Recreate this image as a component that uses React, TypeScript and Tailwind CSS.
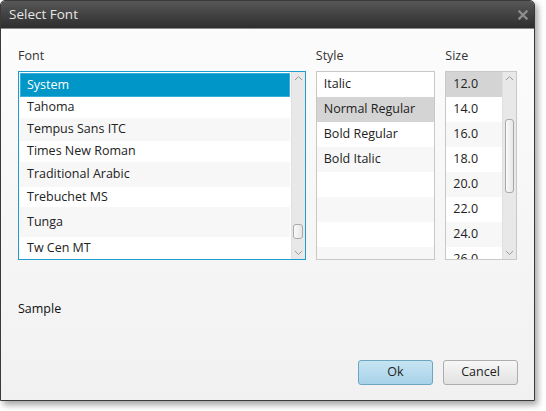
import React from "react";

const font = { fontFamily: '"Open Sans", "Noto Sans", sans-serif' };

function UpArrow() {
  return (
    <svg width="9" height="6" viewBox="0 0 9 6">
      <path d="M1 5 L4.5 1.5 L8 5" fill="none" stroke="#9a9a9a" strokeWidth="1" />
    </svg>
  );
}
function DownArrow() {
  return (
    <svg width="9" height="6" viewBox="0 0 9 6">
      <path d="M1 1 L4.5 4.5 L8 1" fill="none" stroke="#9a9a9a" strokeWidth="1" />
    </svg>
  );
}

const fonts: { name: string; h: number; bg: string }[] = [
  { name: "Tahoma", h: 21, bg: "bg-white" },
  { name: "Tempus Sans ITC", h: 23, bg: "bg-[#f7f7f7]" },
  { name: "Times New Roman", h: 21, bg: "bg-white" },
  { name: "Traditional Arabic", h: 25, bg: "bg-[#f7f7f7]" },
  { name: "Trebuchet MS", h: 20, bg: "bg-white" },
  { name: "Tunga", h: 30, bg: "bg-[#f7f7f7]" },
  { name: "Tw Cen MT", h: 23, bg: "bg-white" },
];

const styles = ["Italic", "Normal Regular", "Bold Regular", "Bold Italic", "", "", "", ""];
const sizes = ["12.0", "14.0", "16.0", "18.0", "20.0", "22.0", "24.0", "26.0"];

export default function App() {
  return (
    <div className="w-[546px] h-[411px] bg-white text-[12.5px] text-[#222]" style={font}>
      <div className="w-[535px] h-[401px] flex flex-col rounded-t-[5px] border border-[#3a3a3a] shadow-[3px_4px_6px_rgba(0,0,0,0.35)] overflow-hidden">
        {/* Title bar */}
        <div className="h-[28px] shrink-0 flex items-center justify-between pl-[8px] pr-[6px] bg-gradient-to-b from-[#585858] to-[#2e2e2e] border-b border-[#8a8a8a]">
          <span className="text-[13.5px] text-[#e6e6e6] leading-none">Select Font</span>
          <svg width="10" height="10" viewBox="0 0 10 10" className="mt-[1px]">
            <path d="M1.5 1.5 L8.5 8.5 M8.5 1.5 L1.5 8.5" stroke="#8c8c8c" strokeWidth="2.4" strokeLinecap="square" />
          </svg>
        </div>
        {/* Body */}
        <div className="flex-1 flex flex-col bg-gradient-to-b from-[#fcfcfc] to-[#f1f1f1] px-[17px]">
          <div className="flex pt-[17px]">
            {/* Font column */}
            <div className="w-[289px] flex flex-col">
              <div className="h-[20px] leading-[20px] text-[#333] mb-[5px]">Font</div>
              <div className="h-[189px] border border-[#1e9bd1] flex bg-white">
                <div className="flex-1 flex flex-col p-[1px] overflow-hidden">
                  <div className="h-[24px] shrink-0 bg-[#0096c8] border border-[#38b0dc] flex items-center pl-[6px] text-white">System</div>
                  {fonts.map((f) => (
                    <div key={f.name} className={`shrink-0 flex items-center pl-[7px] ${f.bg}`} style={{ height: f.h }}>
                      {f.name}
                    </div>
                  ))}
                </div>
                <div className="w-[14px] bg-[#e8e8e8] flex flex-col items-center justify-between py-[3px] border-l border-[#e0e0e0]">
                  <UpArrow />
                  <div className="flex-1" />
                  <div className="w-[10px] h-[15px] rounded-[3px] bg-gradient-to-r from-[#fafafa] to-[#e6e6e6] border border-[#a9a9a9] mb-[11px]" />
                  <DownArrow />
                </div>
              </div>
            </div>
            {/* Style column */}
            <div className="w-[120px] ml-[10px] flex flex-col">
              <div className="h-[20px] leading-[20px] text-[#333] mb-[5px]">Style</div>
              <div className="h-[189px] border border-[#c8c8c8] bg-white flex flex-col overflow-hidden">
                {styles.map((s, i) => (
                  <div
                    key={i}
                    className={`h-[25px] shrink-0 flex items-center pl-[7px] ${
                      i === 1 ? "bg-[#d4d4d4]" : i % 2 === 1 ? "bg-[#f7f7f7]" : "bg-white"
                    }`}
                  >
                    {s}
                  </div>
                ))}
              </div>
            </div>
            {/* Size column */}
            <div className="w-[72px] ml-[10px] flex flex-col">
              <div className="h-[20px] leading-[20px] text-[#333] mb-[5px]">Size</div>
              <div className="h-[189px] border border-[#c8c8c8] bg-white flex overflow-hidden">
                <div className="flex-1 flex flex-col overflow-hidden">
                  {sizes.map((s, i) => (
                    <div
                      key={s}
                      className={`h-[25px] shrink-0 flex items-center pl-[7px] ${
                        i === 0 ? "bg-[#d4d4d4]" : i % 2 === 0 ? "bg-[#f7f7f7]" : "bg-white"
                      }`}
                    >
                      {s}
                    </div>
                  ))}
                </div>
                <div className="w-[14px] bg-[#e8e8e8] flex flex-col items-center py-[3px] border-l border-[#e0e0e0]">
                  <UpArrow />
                  <div className="w-[9px] h-[74px] mt-[38px] rounded-[3px] bg-gradient-to-r from-[#fafafa] to-[#e6e6e6] border border-[#a9a9a9]" />
                  <div className="flex-1" />
                  <DownArrow />
                </div>
              </div>
            </div>
          </div>
          <div className="mt-[39px] h-[20px] leading-[20px] text-[#111]">Sample</div>
          <div className="flex-1" />
          <div className="flex justify-end gap-[10px] pb-[15px] mr-[-1px]">
            <button className="w-[75px] h-[25px] rounded-[3px] border border-[#6ea6c2] bg-gradient-to-b from-[#c6e4f2] to-[#a7d2e9] text-[#222]">
              Ok
            </button>
            <button className="w-[75px] h-[25px] rounded-[3px] border border-[#adadad] bg-gradient-to-b from-[#f7f7f7] to-[#e2e2e2] text-[#222]">
              Cancel
            </button>
          </div>
        </div>
      </div>
    </div>
  );
}
